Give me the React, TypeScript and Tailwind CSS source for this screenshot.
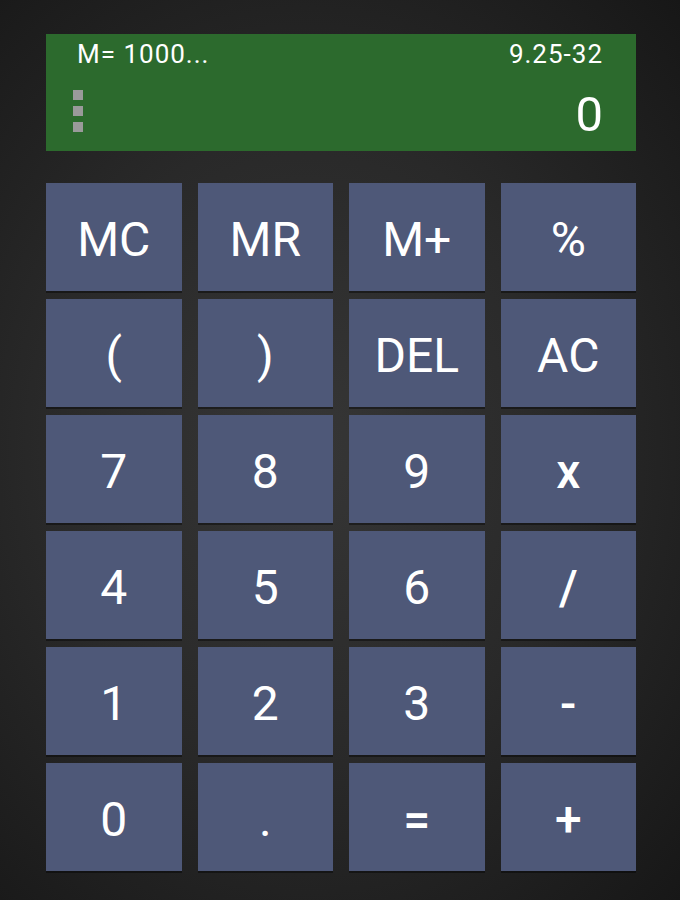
const keys: { label: string; op?: boolean }[] = [
  { label: "MC" },
  { label: "MR" },
  { label: "M+" },
  { label: "%" },
  { label: "(" },
  { label: ")" },
  { label: "DEL" },
  { label: "AC" },
  { label: "7" },
  { label: "8" },
  { label: "9" },
  { label: "x", op: true },
  { label: "4" },
  { label: "5" },
  { label: "6" },
  { label: "/", op: true },
  { label: "1" },
  { label: "2" },
  { label: "3" },
  { label: "-", op: true },
  { label: "0" },
  { label: "." },
  { label: "=", op: true },
  { label: "+", op: true },
];

function Key({ label, op }: { label: string; op?: boolean }) {
  return (
    <button
      className={`flex h-[108px] items-center justify-center bg-[#4e5878] pt-[6px] text-[48px] leading-none text-white shadow-[0_2px_0_rgba(0,0,0,0.4)] ${
        op ? "font-medium" : "font-normal"
      }`}
    >
      {label}
    </button>
  );
}

export default function App() {
  return (
    <div
      className="min-h-[900px] w-full bg-[radial-gradient(ellipse_at_45%_50%,#363636_0%,#292929_50%,#171717_100%)] px-[46px] pt-[34px]"
      style={{ fontFamily: "Roboto, 'Liberation Sans', sans-serif" }}
    >
      {/* display */}
      <div className="flex h-[117px] w-[590px] flex-col bg-[#2c6a2d] pl-[27px] pr-[33px] pt-[6px] text-white">
        <div className="ml-[4px] flex justify-between text-[26px] leading-[28px] tracking-[1px]">
          <span>M= 1000...</span>
          <span>9.25-32</span>
        </div>
        <div className="mt-[20px] flex items-start justify-between">
          <div className="mt-[2px] flex flex-col gap-[6px]">
            <span className="h-[10px] w-[10px] bg-[#9a9a9a]" />
            <span className="h-[10px] w-[10px] bg-[#9a9a9a]" />
            <span className="h-[10px] w-[10px] bg-[#9a9a9a]" />
          </div>
          <span className="mt-[3px] text-[49px] leading-[48px]">0</span>
        </div>
      </div>

      {/* keypad */}
      <div className="mt-[32px] grid w-[590px] grid-cols-4 gap-x-[16px] gap-y-[8px]">
        {keys.map((k) => (
          <Key key={k.label} label={k.label} op={k.op} />
        ))}
      </div>
    </div>
  );
}
